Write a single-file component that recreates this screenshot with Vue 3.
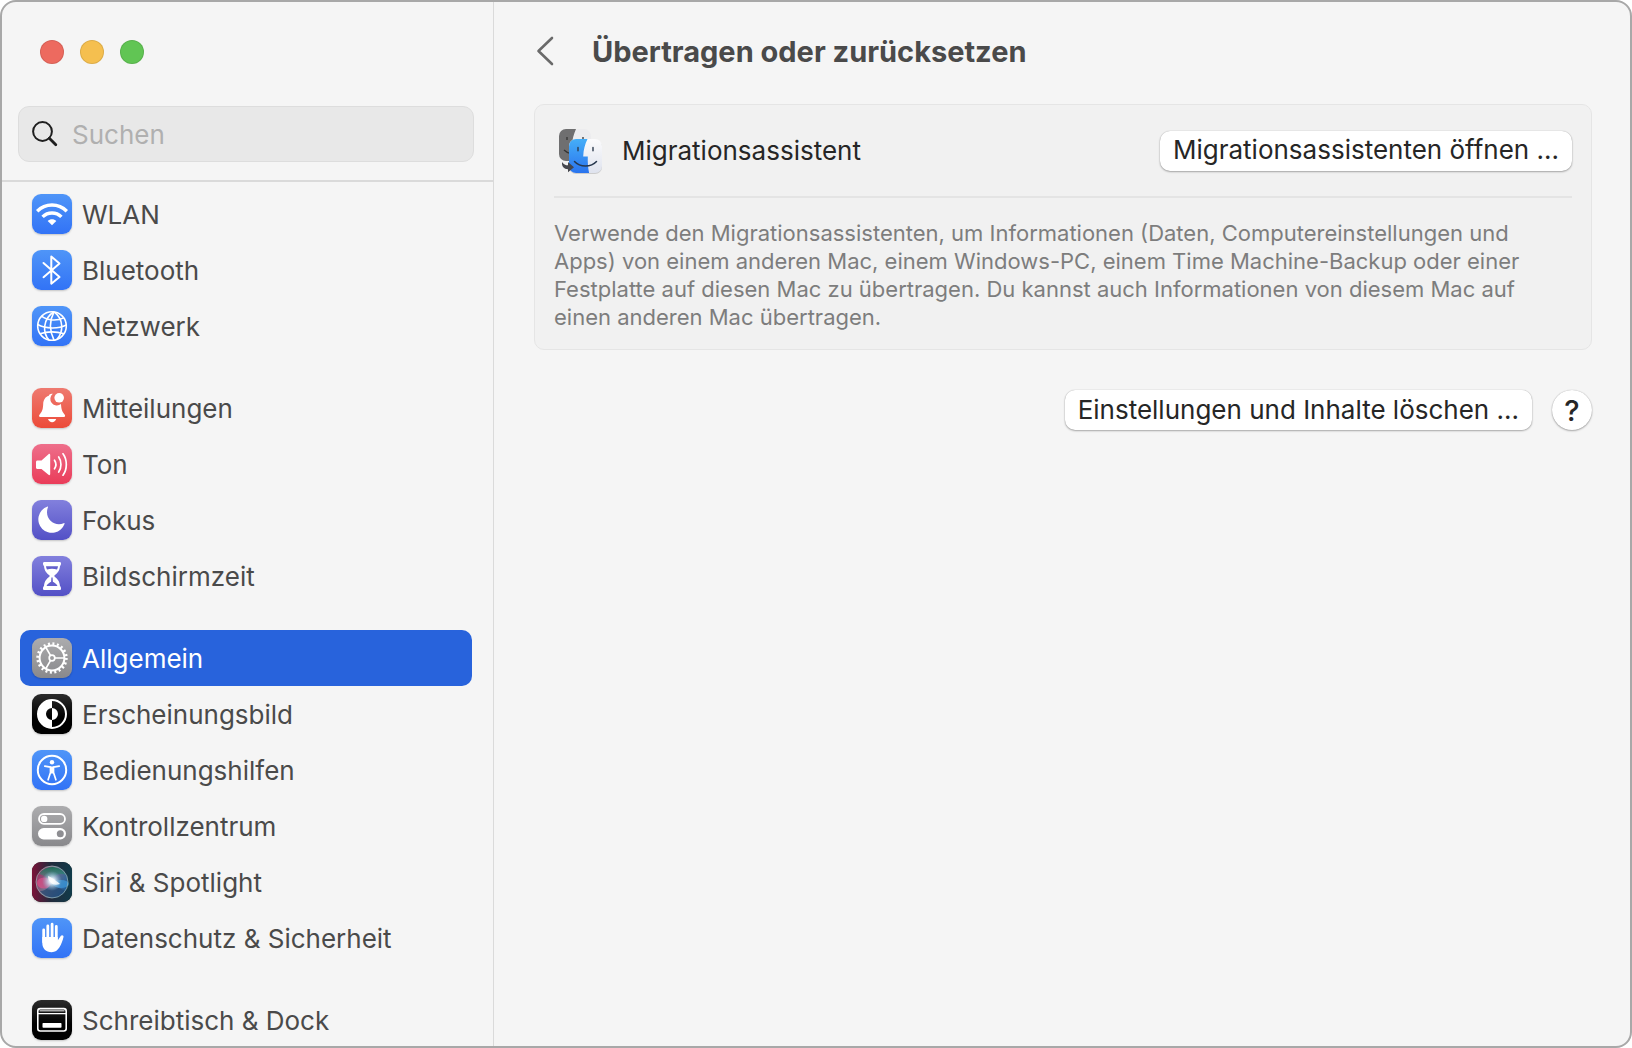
<template>
  <div class="window">
    <!-- icon artwork, referenced by id from the list below -->
    <svg class="icon-defs" width="0" height="0" aria-hidden="true">
      <defs>
        <radialGradient id="siri-orb" cx="50%" cy="50%" r="50%">
          <stop offset="0" stop-color="#ffffff" />
          <stop offset="0.3" stop-color="#dff1fc" stop-opacity="0.9" />
          <stop offset="1" stop-color="#7fb8d8" stop-opacity="0" />
        </radialGradient>
        <linearGradient id="siri-bg" x1="0" y1="0" x2="1" y2="0">
          <stop offset="0" stop-color="#7c1238" />
          <stop offset="0.45" stop-color="#232a3c" />
          <stop offset="1" stop-color="#103b4a" />
        </linearGradient>
        <linearGradient id="siri-ball" x1="0" y1="0.2" x2="1" y2="0.8">
          <stop offset="0" stop-color="#b52a62" />
          <stop offset="0.4" stop-color="#7d7b98" />
          <stop offset="1" stop-color="#1466b0" />
        </linearGradient>
        <linearGradient id="siri-green" x1="0" y1="0" x2="0" y2="1">
          <stop offset="0" stop-color="#1d6b56" />
          <stop offset="1" stop-color="#3aa58c" stop-opacity="0.1" />
        </linearGradient>
        <linearGradient id="finder-blue" x1="0" y1="0" x2="0" y2="1">
          <stop offset="0" stop-color="#45aef8" />
          <stop offset="1" stop-color="#2a74ee" />
        </linearGradient>
        <linearGradient id="finder-white" x1="0" y1="0" x2="0" y2="1">
          <stop offset="0" stop-color="#fbfbfc" />
          <stop offset="1" stop-color="#dfe3ee" />
        </linearGradient>
        <clipPath id="finder-back"><rect x="3" y="2" width="32" height="32" rx="7" /></clipPath>
        <clipPath id="finder-front"><rect x="13" y="12" width="33" height="34" rx="7" /></clipPath>
      </defs>

      <symbol id="i-wlan" viewBox="0 0 40 40">
        <g fill="none" stroke="#fff" stroke-width="3.4">
          <path d="M5.2 17.2a20.8 20.8 0 0 1 29.6 0" />
          <path d="M10.6 22.9a13.2 13.2 0 0 1 18.8 0" />
        </g>
        <path fill="#fff" d="M20 31.2l-4.3-4.3c2.3-2.2 6.3-2.2 8.6 0z" />
      </symbol>

      <symbol id="i-bluetooth" viewBox="0 0 40 40">
        <path d="M11.5 13l16 14-8.2 6.700V6.600l8.2 6.800-16 13.800" fill="none" stroke="#fff" stroke-width="2" stroke-linejoin="round" stroke-linecap="round" />
      </symbol>

      <symbol id="i-network" viewBox="0 0 40 40">
        <g fill="none" stroke="#fff" stroke-width="1.6">
          <circle cx="20" cy="20" r="14.300" />
          <path d="M22 5.800C10.500 13 10.500 27 17 34" />
          <path d="M22 5.800c-4.500 8.500-4.500 19 0 28.400" />
          <path d="M22 5.800C32 13 31.500 26 25 33.400" />
          <path d="M9.500 10.200c6 4.600 15.500 5 22.300 1.700" />
          <path d="M5.700 18.500c8 4.500 21 4.500 28.600.5" />
          <path d="M8 27.700c7-2.200 17-2 24.200 0" />
        </g>
      </symbol>

      <symbol id="i-bell" viewBox="0 0 40 40">
        <path fill="#fff" d="M20.800 5.800c-1.900-.4-3.600.3-4 1.900-3.800 1.200-5.400 4.400-5.600 8.300-.3 5.600-1 7.400-3 9.700-1.700 1.900-1.500 3.200.3 3.200h23.200c1.800 0 2-1.300.3-3.200-1.900-2.200-2.700-4.300-3-9.600a6.300 6.300 0 0 1-8.200-10.300z" />
        <circle cx="27.200" cy="9.800" r="4.800" fill="#fff" />
        <path fill="#fff" d="M16 31h8.200c-.6 2-2.200 3.200-4.100 3.200S16.600 33 16 31z" />
      </symbol>

      <symbol id="i-sound" viewBox="0 0 40 40">
        <path fill="#fff" d="M5.500 16.400h4l7-6.200c.8-.7 1.700-.3 1.700.7v19.200c0 1-.9 1.400-1.700.7l-7-5.800h-4c-.9 0-1.500-.6-1.500-1.500v-5.600c0-.9.600-1.500 1.500-1.500z" />
        <g fill="none" stroke="#fff" stroke-width="1.700" stroke-linecap="round">
          <path d="M22.500 16.200c1.600 2.400 1.600 6.200 0 8.600" />
          <path d="M26.700 13c3 4.200 3 10.800 0 15" />
          <path d="M31 9.800c4.400 5.900 4.400 15.500 0 21.400" />
        </g>
      </symbol>

      <symbol id="i-moon" viewBox="0 0 40 40">
        <path fill="#fff" d="M15.900 7.400c.3-.7-.2-1-.8-.7A13.500 13.500 0 1 0 32.500 24c.3-.7-.1-1.100-.8-.8C22 27.200 11.900 18 15.900 7.400z" />
      </symbol>

      <symbol id="i-hourglass" viewBox="0 0 40 40">
        <path fill="#fff" d="M12.500 6h15c1 0 1.500.5 1.500 1.500s-.3 2-1 2.500c-.4 5.200-2.800 7.300-5.300 9.300-.5.400-.5 1 0 1.400 2.500 2 4.900 4.100 5.300 9.300.7.500 1 1.500 1 2.500s-.5 1.500-1.500 1.500h-15c-1 0-1.500-.5-1.500-1.500s.3-2 1-2.500c.4-5.200 2.800-7.300 5.300-9.300.5-.4.500-1 0-1.400-2.500-2-4.900-4.100-5.300-9.300-.7-.5-1-1.500-1-2.500S11.500 6 12.500 6z" />
        <path fill="#6460cc" d="M14 10.200h12c-.1 1.300-.5 2.500-1 3.400-3.300-1-6.700-1-10 0-.5-.9-.9-2.100-1-3.400zM19.400 21.500h1.200l.3 4.200c1.700.9 3.600 2.200 4.600 4.300h-11c1-2.100 2.900-3.400 4.600-4.300z" />
      </symbol>

      <symbol id="i-gear" viewBox="0 0 40 40">
        <g fill="none" stroke="#fff">
          <circle cx="20" cy="20" r="12.400" stroke-width="2" />
          <circle cx="20" cy="20" r="14.300" stroke-width="2.800" stroke-dasharray="2 2.492" />
          <circle cx="20" cy="20" r="2.800" stroke-width="1.700" />
          <path stroke-width="1.700" d="M22.800 20h9.200M18.600 17.600l-4.600-8M18.600 22.400l-4.600 8" />
        </g>
      </symbol>

      <symbol id="i-appearance" viewBox="0 0 40 40">
        <circle cx="20" cy="20" r="14" fill="none" stroke="#fff" stroke-width="2" />
        <path fill="#fff" d="M20 6v8a6 6 0 0 0 0 12v8a14 14 0 0 1 0-28zM20 14a6 6 0 0 1 0 12z" />
      </symbol>

      <symbol id="i-access" viewBox="0 0 40 40">
        <circle cx="20" cy="20" r="14.200" fill="none" stroke="#fff" stroke-width="2" />
        <circle cx="20" cy="12.200" r="2.200" fill="#fff" />
        <path d="M12.800 16.200l5.700 1v5.300l-2.400 7.300M27.200 16.200l-5.700 1v5.300l2.400 7.300" fill="none" stroke="#fff" stroke-width="1.700" stroke-linecap="round" stroke-linejoin="round" />
        <path fill="#fff" d="M18 16.500h4v7h-4z" />
      </symbol>

      <symbol id="i-control" viewBox="0 0 40 40">
        <rect x="7" y="8" width="26" height="9.800" rx="4.900" fill="none" stroke="#fff" stroke-width="1.800" />
        <circle cx="12.200" cy="12.900" r="3.200" fill="#fff" />
        <rect x="6" y="22" width="28" height="11.400" rx="5.700" fill="#fff" />
        <circle cx="28.300" cy="27.700" r="3.500" fill="#8e8e92" />
      </symbol>

      <symbol id="i-siri" viewBox="0 0 40 40">
        <rect width="40" height="40" fill="url(#siri-bg)" />
        <circle cx="20" cy="20" r="16" fill="url(#siri-ball)" opacity=".85" />
        <path d="M7 12a16 16 0 0 1 27 1c-7-3-13 1-15 7-3-5-8-7-12-8z" fill="url(#siri-green)" />
        <path d="M8 29c8 0 9-6 12-9 4 4 8 8 14 8a16 16 0 0 1-26 1z" fill="#24466e" opacity=".7" />
        <ellipse cx="12" cy="21" rx="7" ry="5.500" fill="#ec4f8b" opacity=".6" />
        <ellipse cx="29" cy="22" rx="8" ry="4" fill="#3fa4ea" opacity=".6" />
        <circle cx="20" cy="19" r="10" fill="url(#siri-orb)" />
        <path d="M16 14c3 1 6 3 8 5 2 1 3 2 4 3-3 1-7 1-9-1-2-2-3-4-3-7z" fill="#fff" opacity=".8" />
        <circle cx="20" cy="20" r="16" fill="none" stroke="#9ab7b8" stroke-opacity=".7" />
      </symbol>

      <symbol id="i-hand" viewBox="0 0 40 40">
        <g fill="none" stroke="#fff" stroke-width="2.800" stroke-linecap="round">
          <path d="M11.700 12v12M15.800 8v14M20.100 6.200V22M24.300 8.500V24" />
        </g>
        <path fill="#fff" d="M10.300 19h15.400v3.500l3.200-4.700c.9-1.300 3-.6 2.600 1.200-.7 3-2 7-4 10.300-2 3.200-4.300 4.900-7.800 4.900-5.800 0-9.400-3.400-9.400-9.400z" />
      </symbol>

      <symbol id="i-dock" viewBox="0 0 40 40">
        <rect x="5.800" y="8.600" width="28.400" height="22.400" rx="2.400" fill="none" stroke="#fff" stroke-width="1.600" />
        <path fill="#aaa" d="M7.500 10h25v1.600h-25z" />
        <path fill="#fff" d="M6 13h28v1.300H6z" />
        <rect x="10.500" y="23" width="19" height="4.800" rx=".8" fill="#fff" />
      </symbol>
    </svg>

    <aside class="sidebar">
      <div class="lights">
        <button class="light red" aria-label="Schließen"></button>
        <button class="light yellow" aria-label="Minimieren"></button>
        <button class="light green" aria-label="Zoomen"></button>
      </div>
      <label class="search">
        <svg width="26" height="26" viewBox="0 0 26 26" aria-hidden="true">
          <circle cx="10.500" cy="10.500" r="9.400" fill="none" stroke="#1f1f1f" stroke-width="2" />
          <path d="M17.300 17.300l6.500 6.500" stroke="#1f1f1f" stroke-width="2.800" stroke-linecap="round" />
        </svg>
        <input v-model="query" type="text" placeholder="Suchen" aria-label="Suchen" />
      </label>

      <nav class="nav">
        <ul v-for="(group, i) in groups" :key="i" class="group">
          <li v-for="item in group" :key="item.icon">
            <a href="#" class="nav-item" :class="{ active: active === item.icon }" @click.prevent="active = item.icon">
              <span class="tile" :class="item.tint">
                <svg width="40" height="40"><use :href="'#i-' + item.icon" /></svg>
              </span>
              <span>{{ item.label }}</span>
            </a>
          </li>
        </ul>
      </nav>
    </aside>

    <main class="content">
      <header class="header">
        <button class="back" aria-label="Zurück">
          <svg width="18" height="30" viewBox="0 0 18 30">
            <path d="M16 2L2.500 15 16 28" fill="none" stroke="#6a6a6a" stroke-width="2.600" stroke-linecap="round" stroke-linejoin="round" />
          </svg>
        </button>
        <h1>Übertragen oder zurücksetzen</h1>
      </header>

      <section class="card">
        <div class="card-row">
          <svg class="finder" width="48" height="48" viewBox="0 0 48 48" aria-hidden="true">
            <g clip-path="url(#finder-back)">
              <path fill="#ececee" d="M3 2h32v32H3z" />
              <path fill="#6f6f70" d="M3 2h17c-2 5-4 10-4 17h3v15H3z" />
              <path d="M11 10v3M27 10v3M8 23c2 2 4 3 7 3.500" stroke="#333" stroke-width="1.300" fill="none" />
            </g>
            <rect x="13" y="13" width="33" height="34" rx="7" fill="#000" opacity=".15" />
            <g clip-path="url(#finder-front)">
              <path fill="url(#finder-white)" d="M13 12h33v34H13z" />
              <path fill="url(#finder-blue)" d="M13 12h18.500c-2.600 5.500-4 10.500-4.300 17.500h4.600c-.2 6 .2 11 1.300 16.500H13z" />
              <path d="M22 20.500v3.300M37 20.500v3.300" stroke="#2b3a4c" stroke-width="1.400" stroke-linecap="round" />
              <path d="M18.500 34.500c5.500 6 16.500 6 22 0" fill="none" stroke="#26374d" stroke-width="1.500" stroke-linecap="round" />
            </g>
            <path fill="#45474d" d="M6 35c1.500 2.500 3.500 3.300 6 3.300V35l6 5.200-6 5v-3c-4 0-6.500-2.700-6-7.200z" />
          </svg>
          <span class="card-title">Migrationsassistent</span>
          <button class="btn">Migrationsassistenten öffnen ...</button>
        </div>
        <p class="card-text">
          Verwende den Migrationsassistenten, um Informationen (Daten, Computereinstellungen und
          Apps) von einem anderen Mac, einem Windows-PC, einem Time Machine-Backup oder einer
          Festplatte auf diesen Mac zu übertragen. Du kannst auch Informationen von diesem Mac auf
          einen anderen Mac übertragen.
        </p>
      </section>

      <div class="actions">
        <button class="btn">Einstellungen und Inhalte löschen ...</button>
        <button class="help" aria-label="Hilfe">?</button>
      </div>
    </main>
  </div>
</template>

<script setup>
import { ref } from 'vue';

const query = ref('');
const active = ref('gear');

const groups = [
  [
    { icon: 'wlan', label: 'WLAN', tint: 'blue' },
    { icon: 'bluetooth', label: 'Bluetooth', tint: 'blue' },
    { icon: 'network', label: 'Netzwerk', tint: 'blue' },
  ],
  [
    { icon: 'bell', label: 'Mitteilungen', tint: 'red' },
    { icon: 'sound', label: 'Ton', tint: 'pink' },
    { icon: 'moon', label: 'Fokus', tint: 'indigo' },
    { icon: 'hourglass', label: 'Bildschirmzeit', tint: 'indigo' },
  ],
  [
    { icon: 'gear', label: 'Allgemein', tint: 'gray' },
    { icon: 'appearance', label: 'Erscheinungsbild', tint: 'black' },
    { icon: 'access', label: 'Bedienungshilfen', tint: 'blue' },
    { icon: 'control', label: 'Kontrollzentrum', tint: 'gray' },
    { icon: 'siri', label: 'Siri & Spotlight', tint: 'black' },
    { icon: 'hand', label: 'Datenschutz & Sicherheit', tint: 'blue' },
  ],
  [
    { icon: 'dock', label: 'Schreibtisch & Dock', tint: 'black' },
  ],
];
</script>

<style>
body {
  background: #fff;
}
</style>

<style scoped>
.window {
  display: flex;
  box-sizing: border-box;
  height: 100vh;
  overflow: hidden;
  background: #f5f5f5;
  border: 2px solid #a8a8a8;
  border-radius: 16px;
  font-family: Inter, "Liberation Sans", sans-serif;
  font-size: 26px;
  color: #4a4a4a;
}
button {
  font: inherit;
  border: none;
  padding: 0;
  cursor: pointer;
}
.icon-defs {
  position: absolute;
}

/* sidebar */
.sidebar {
  display: flex;
  flex-direction: column;
  flex: none;
  box-sizing: border-box;
  width: 492px;
  border-right: 1px solid #dadada;
}
.lights {
  display: flex;
  gap: 16px;
  padding: 38px 38px 42px;
}
.light {
  width: 24px;
  height: 24px;
  border-radius: 50%;
  box-shadow: inset 0 0 0 1px rgba(0, 0, 0, 0.1);
}
.red { background: #ed6a5f; }
.yellow { background: #f5bf4f; }
.green { background: #61c554; }

.search {
  display: flex;
  align-items: center;
  gap: 14px;
  box-sizing: border-box;
  height: 56px;
  margin: 0 19px 18px 16px;
  padding: 0 13px;
  background: #e8e8e8;
  border: 1px solid #dddddd;
  border-radius: 11px;
}
.search input {
  flex: 1;
  min-width: 0;
  padding: 0;
  font: inherit;
  color: #262626;
  background: none;
  border: none;
  outline: none;
}
.search input::placeholder {
  color: #b0b0b0;
  opacity: 1;
}

.nav {
  flex: 1;
  min-height: 0;
  padding: 4px 21px 0 18px;
  border-top: 2px solid #dadada;
  overflow: hidden;
}
.group {
  list-style: none;
  margin: 0 0 26px;
  padding: 0;
}
.nav-item {
  display: flex;
  align-items: center;
  gap: 10px;
  height: 56px;
  padding: 0 12px;
  border-radius: 10px;
  color: #4a4a4a;
  text-decoration: none;
  white-space: nowrap;
}
.nav-item.active {
  background: #2863dc;
  color: #fff;
}
.tile {
  flex: none;
  width: 40px;
  height: 40px;
  border-radius: 9px;
  overflow: hidden;
  box-shadow: 0 1px 2px rgba(0, 0, 0, 0.2);
}
.tile svg {
  display: block;
}
.tile.blue { background: linear-gradient(#4f95f8, #3273f6); }
.tile.red { background: linear-gradient(#ee7a70, #ec4b39); }
.tile.pink { background: linear-gradient(#ee6f8b, #ea3c59); }
.tile.indigo { background: linear-gradient(#8280dd, #5350c6); }
.tile.gray { background: linear-gradient(#acacae, #89898c); }
.tile.black { background: linear-gradient(#2c2c2c, #000 60%); }

/* content */
.content {
  flex: 1;
  min-width: 0;
  padding: 0 38px 0 40px;
}
.header {
  display: flex;
  align-items: center;
  gap: 38px;
  height: 102px;
  box-sizing: border-box;
  padding: 0 0 4px 2px;
}
.back {
  display: flex;
  background: none;
}
h1 {
  margin: 0;
  font-size: 29px;
  font-weight: 700;
}
.card {
  padding: 0 19px;
  background: #f1f1f1;
  border: 1px solid #e5e5e5;
  border-radius: 10px;
}
.card-row {
  display: flex;
  align-items: center;
  height: 91px;
  border-bottom: 2px solid #e4e4e4;
}
.finder {
  margin: 0 18px 0 2px;
}
.card-title {
  flex: 1;
  color: #262626;
}
.card-text {
  margin: 0;
  padding: 21px 24px 18px 0;
  font-size: 22px;
  line-height: 28px;
  color: #7d7d7d;
}
.btn {
  height: 40px;
  padding: 0 13px 2px;
  color: #262626;
  background: #fff;
  border-radius: 10px;
  box-shadow: 0 0 1px rgba(0, 0, 0, 0.3), 0 1px 2px rgba(0, 0, 0, 0.3);
  white-space: nowrap;
}
.actions {
  display: flex;
  justify-content: flex-end;
  gap: 20px;
  margin-top: 40px;
}
.help {
  width: 40px;
  height: 40px;
  font-size: 29px;
  font-weight: 500;
  color: #262626;
  background: #fff;
  border-radius: 50%;
  box-shadow: 0 0 1px rgba(0, 0, 0, 0.3), 0 1px 2px rgba(0, 0, 0, 0.3);
}
</style>
